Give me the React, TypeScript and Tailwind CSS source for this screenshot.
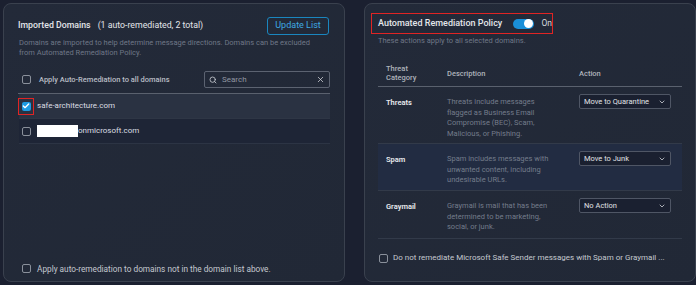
import { Search, X, ChevronDown, Check } from "lucide-react";

interface Policy {
  name: string;
  desc: string[];
  action: string;
  highlight?: boolean;
}

const policies: Policy[] = [
  {
    name: "Threats",
    desc: [
      "Threats include messages",
      "flagged as Business Email",
      "Compromise (BEC), Scam,",
      "Malicious, or Phishing.",
    ],
    action: "Move to Quarantine",
  },
  {
    name: "Spam",
    desc: ["Spam includes messages with", "unwanted content, including", "undesirable URLs."],
    action: "Move to Junk",
    highlight: true,
  },
  {
    name: "Graymail",
    desc: ["Graymail is mail that has been", "determined to be marketing,", "social, or junk."],
    action: "No Action",
  },
];

function Box({ checked }: { checked?: boolean }) {
  if (checked) {
    return (
      <span className="flex h-[9px] w-[9px] shrink-0 items-center justify-center rounded-[2px] bg-[#1d9be2]">
        <Check size={8} strokeWidth={4} className="text-white" />
      </span>
    );
  }
  return <span className="block h-[9px] w-[9px] shrink-0 rounded-[2px] border border-[#8a909b]" />;
}

function DomainsPanel() {
  return (
    <div className="flex h-[279px] w-[342px] flex-col rounded-[8px] border border-[#3a414e] bg-gradient-to-br from-[#232a39] to-[#212836] px-[14px] pb-[6px] pt-[13px]">
      <div className="flex items-center justify-between">
        <div className="flex items-baseline whitespace-nowrap text-[8.75px] text-[#e4e6ea]">
          <span className="font-medium">Imported Domains</span>
          <span className="ml-[7px]">(1 auto-remediated, 2 total)</span>
        </div>
        <button className="mr-[1px] h-[18px] w-[62px] rounded-[3px] border border-[#1a86bf] text-[9px] text-[#3fa8e2]">
          Update List
        </button>
      </div>
      <p className="mt-[3px] whitespace-nowrap pl-[1px] text-[7.5px] leading-[10px] text-[#6f7787]">
        Domains are imported to help determine message directions. Domains can be excluded
        <br />
        from Automated Remediation Policy.
      </p>
      <div className="mt-[13px] flex items-center justify-between border-b border-[#5a616e] pb-[5px] pl-[1px]">
        <label className="flex items-center gap-[8px] whitespace-nowrap pl-[3px] text-[7.5px] font-medium text-[#b9bdc5]">
          <Box />
          Apply Auto-Remediation to all domains
        </label>
        <div className="flex h-[17px] w-[126px] items-center rounded-[2px] border border-[#5c6371] px-[4px] text-[8px] text-[#9096a1]">
          <Search size={8} strokeWidth={2.5} className="text-[#c7cad0]" />
          <span className="ml-[5px] flex-1">Search</span>
          <X size={9} strokeWidth={2} className="text-[#d4d7dc]" />
        </div>
      </div>
      <div className="ml-[1px] flex h-[25px] items-center border-b border-[#2e3645] bg-[#2a3242] pl-[3px] text-[8px] text-[#dcdee2]">
        <span className="-ml-[4px] flex h-[17px] w-[16px] items-center justify-center border-[1.5px] border-[#e02424]">
          <Box checked />
        </span>
        <span className="ml-[3px]">safe-architecture.com</span>
      </div>
      <div className="ml-[1px] flex h-[25px] items-center border-b border-[#2c3444] bg-[#1e2536] pl-[3px] text-[8px] text-[#dcdee2]">
        <Box />
        <span className="ml-[6px] block h-[12px] w-[41px] bg-white" />
        <span>onmicrosoft.com</span>
      </div>
      <div className="flex-1" />
      <label className="flex items-center gap-[6px] whitespace-nowrap pl-[4px] text-[8.25px] text-[#c4c8cf]">
        <Box />
        Apply auto-remediation to domains not in the domain list above.
      </label>
    </div>
  );
}

function PolicyPanel() {
  return (
    <div className="flex h-[279px] w-[332px] flex-col rounded-[8px] border border-[#3a414e] bg-gradient-to-br from-[#232a39] to-[#212836] px-[13px] pb-[9px] pt-[9px]">
      <div className="-ml-[7px] flex h-[21px] w-[182px] items-center whitespace-nowrap border-[1.5px] border-[#e02424] pl-[6px]">
        <span className="text-[9px] font-medium text-[#e4e6ea]">Automated Remediation Policy</span>
        <span className="ml-[11px] flex h-[10px] w-[22px] items-center justify-end rounded-full bg-[#1a8fd8] pr-[1px]">
          <span className="block h-[9px] w-[9px] rounded-full bg-white" />
        </span>
        <span className="ml-[7px] text-[8.5px] text-[#d6d9de]">On</span>
      </div>
      <p className="mt-[1px] whitespace-nowrap text-[7.5px] text-[#6f7787]">These actions apply to all selected domains.</p>
      <div className="mt-[18px] flex items-center border-b-[1.5px] border-[#5a616e] pb-[4px] text-[7.5px] font-medium text-[#aeb3bb]">
        <div className="w-[69px] pl-[8px] leading-[9px]">
          Threat
          <br />
          Category
        </div>
        <div className="w-[132px]">Description</div>
        <div>Action</div>
      </div>
      {policies.map((p) => (
        <div
          key={p.name}
          className={`flex border-b border-[#323a49] pt-[10px] ${p.highlight ? "h-[47px] bg-[#222c42]" : "h-[48px]"} ${p.name === "Threats" ? "h-[57px]" : ""}`}
        >
          <div className="w-[69px] pl-[8px] text-[7.5px] font-semibold text-[#e8eaee]">{p.name}</div>
          <div className="w-[132px] whitespace-nowrap text-[7.5px] leading-[10.5px] text-[#747c8b]">
            {p.desc.map((d) => (
              <div key={d}>{d}</div>
            ))}
          </div>
          <div className="-mt-[3px] flex h-[15px] w-[92px] items-center justify-between rounded-[2px] border border-[#4f5665] bg-[#1a2030] px-[4px] text-[7.5px] text-[#e0e2e6]">
            <span>{p.action}</span>
            <ChevronDown size={8} strokeWidth={2.5} className="text-[#c7cad0]" />
          </div>
        </div>
      ))}
      <div className="flex-1" />
      <label className="mb-[8px] flex items-center gap-[5px] whitespace-nowrap pl-[1px] text-[8px] text-[#c4c8cf]">
        <Box />
        Do not remediate Microsoft Safe Sender messages with Spam or Graymail ...
      </label>
    </div>
  );
}

export default function App() {
  return (
    <div className="flex h-[285px] w-[696px] gap-[19px] bg-[#1b2030] pl-[3px] pt-[3px] font-['Roboto',sans-serif]">
      <DomainsPanel />
      <PolicyPanel />
    </div>
  );
}
